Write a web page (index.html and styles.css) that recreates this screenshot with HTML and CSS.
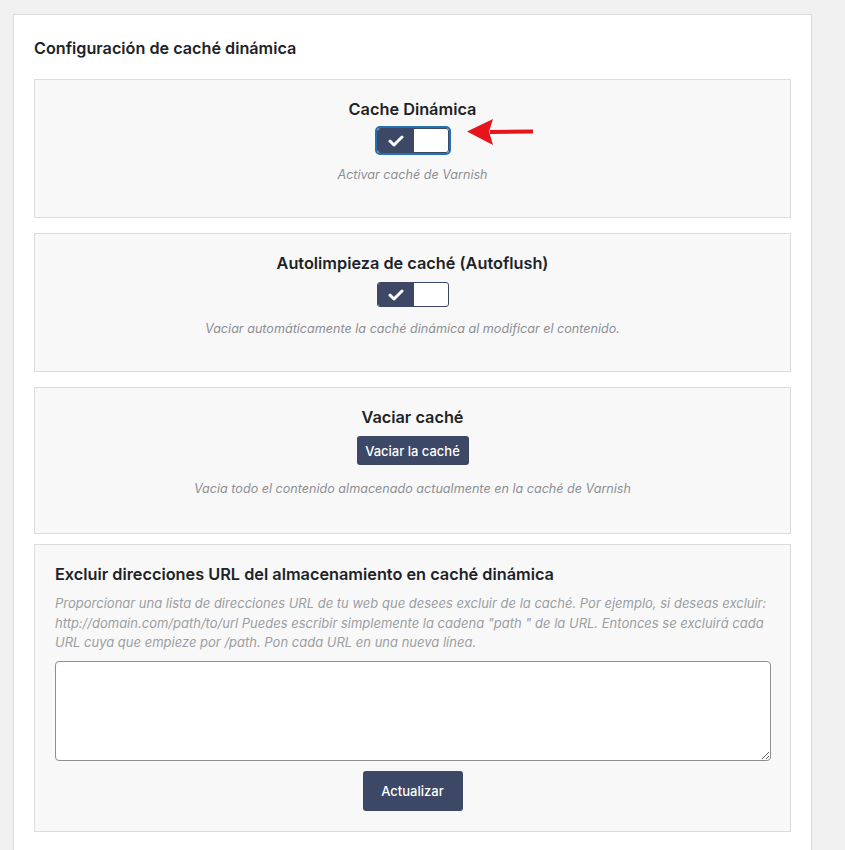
FILE: index.html
```html
<!DOCTYPE html>
<html lang="es">
<head>
<meta charset="utf-8">
<title>Configuración de caché dinámica</title>
<link rel="stylesheet" href="styles.css">
</head>
<body>
<div class="panel">
  <h2 class="panel-title">Configuración de caché dinámica</h2>

  <div class="section center">
    <h3 class="sec-title">Cache Dinámica</h3>
    <div class="toggle-wrap">
      <span class="toggle focused">
        <span class="toggle-on">
          <svg width="16" height="12" viewBox="0 0 16 12"><path d="M2 6.2 L6 10 L14 2" fill="none" stroke="#fff" stroke-width="3" stroke-linecap="round" stroke-linejoin="round"/></svg>
        </span>
        <span class="toggle-off"></span>
      </span>
      <svg class="arrow" width="70" height="30" viewBox="0 0 70 30"><path d="M24 13 L67 12.5 L67 16.5 L24 17 Z" fill="#e8141b"/><path d="M1 14.5 L27 2 L23 14.5 L27 28 Z" fill="#e8141b"/></svg>
    </div>
    <p class="desc">Activar caché de Varnish</p>
  </div>

  <div class="section center">
    <h3 class="sec-title">Autolimpieza de caché (Autoflush)</h3>
    <div class="toggle-wrap">
      <span class="toggle">
        <span class="toggle-on">
          <svg width="16" height="12" viewBox="0 0 16 12"><path d="M2 6.2 L6 10 L14 2" fill="none" stroke="#fff" stroke-width="3" stroke-linecap="round" stroke-linejoin="round"/></svg>
        </span>
        <span class="toggle-off"></span>
      </span>
    </div>
    <p class="desc">Vaciar automáticamente la caché dinámica al modificar el contenido.</p>
  </div>

  <div class="section center s3">
    <h3 class="sec-title">Vaciar caché</h3>
    <div class="btn-row"><button class="btn btn-small">Vaciar la caché</button></div>
    <p class="desc d3">Vacia todo el contenido almacenado actualmente en la caché de Varnish</p>
  </div>

  <div class="section s4">
    <h3 class="sec-title big">Excluir direcciones URL del almacenamiento en caché dinámica</h3>
    <p class="desc left">Proporcionar una lista de direcciones URL de tu web que desees excluir de la caché. Por ejemplo, si deseas excluir:<br>http://domain.com/path/to/url Puedes escribir simplemente la cadena "path " de la URL. Entonces se excluirá cada<br>URL cuya que empieze por /path. Pon cada URL en una nueva línea.</p>
    <textarea class="urls"></textarea>
    <div class="btn-row"><button class="btn btn-big">Actualizar</button></div>
  </div>
</div>
</body>
</html>
```
FILE: styles.css
```css
* { box-sizing: border-box; }
html, body { margin: 0; }
body {
  background: #f0f0f1;
  padding: 14px 0 0 13px;
  font-family: Inter, "Liberation Sans", Arial, sans-serif;
  color: #1d2327;
  height: 850px;
  overflow: hidden;
}
.panel {
  width: 799px;
  background: #fff;
  border: 1px solid #dcdcde;
  padding: 20px 20px 40px;
}
.panel-title {
  margin: 0 0 18px;
  font-size: 16.2px;
  line-height: 26px;
  font-weight: 600;
}
.section {
  background: #f8f8f8;
  border: 1px solid #dcdcde;
  padding: 19px 20px 32px;
  margin-bottom: 15px;
}
.section.s3 { margin-bottom: 10px; padding-bottom: 34px; }
.center { text-align: center; }
.sec-title {
  margin: 0 0 9px;
  font-size: 16.3px;
  line-height: 20px;
  font-weight: 600;
}
.sec-title.big {
  font-size: 16.3px;
  text-align: left;
  margin-bottom: 10px;
}
.toggle-wrap {
  position: relative;
  display: flex;
  justify-content: center;
  height: 25px;
}
.toggle {
  display: flex;
  width: 72px;
  height: 25px;
  border: 1px solid #3d4766;
  border-radius: 3px;
  background: #fff;
}
.toggle.focused {
  outline: 2px solid #2271b1;
  outline-offset: 0px;
}
.toggle-on {
  width: 36px;
  background: #3d4766;
  display: flex;
  align-items: center;
  justify-content: center;
  border-radius: 2px 0 0 2px;
}
.toggle-off { flex: 1; }
.arrow {
  position: absolute;
  left: 411px;
  top: -11px;
}
.desc {
  margin: 12px 0 0;
  font-size: 12.6px;
  line-height: 20px;
  font-style: italic;
  color: #8c8f94;
}
.desc.d3 { margin-top: 14px; }
.desc.left {
  text-align: left;
  margin: 0;
  font-size: 13px;
  line-height: 19.5px;
  color: #9b9ea3;
}
.btn-row { display: flex; justify-content: center; }
.btn {
  background: #3d4766;
  color: #fff;
  border: 0;
  border-radius: 3px;
  font-family: Inter, "Liberation Sans", Arial, sans-serif;
  font-weight: 500;
  cursor: pointer;
}
.btn-small {
  width: 112px;
  height: 29px;
  font-size: 13px;
}
.btn-big {
  width: 100px;
  height: 40px;
  font-size: 13px;
  margin-top: 10px;
}
.s4 { padding-bottom: 20px; }
.urls {
  display: block;
  width: 716px;
  height: 100px;
  margin-top: 8px;
  border: 1px solid #8c8f94;
  border-radius: 4px;
  background: #fff;
  resize: vertical;
}
```
